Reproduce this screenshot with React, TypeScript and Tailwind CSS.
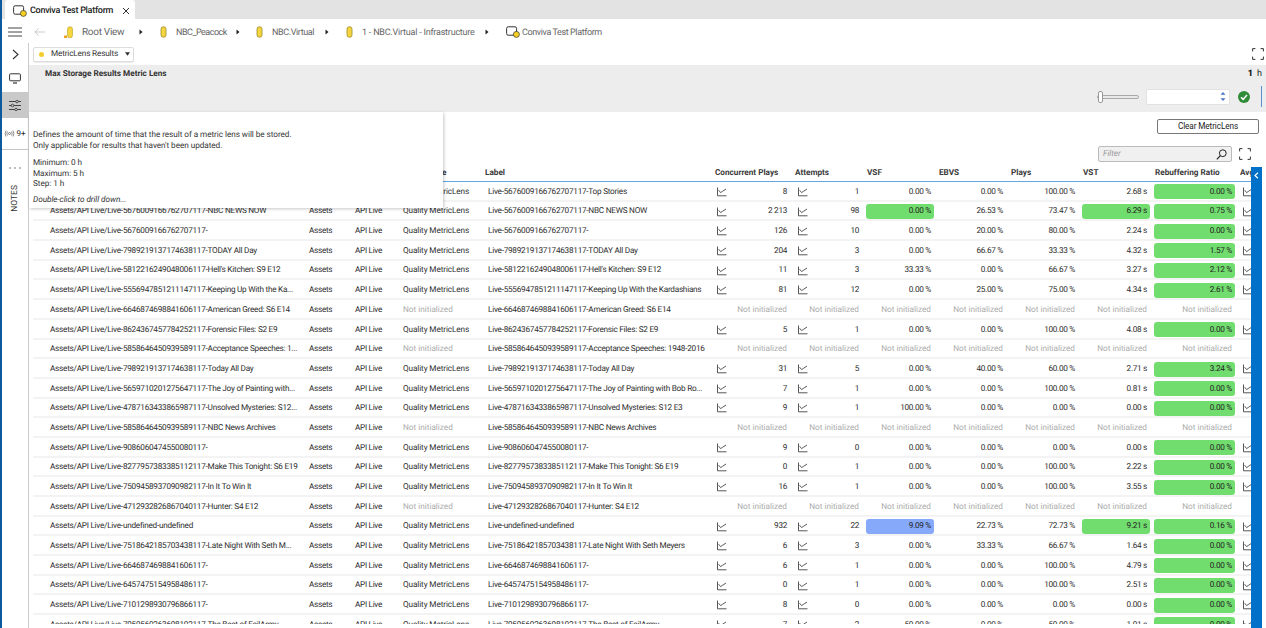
import React from "react";

const Cyl = () => (
  <svg width="7" height="12" viewBox="0 0 7 12" className="shrink-0">
    <rect x="1" y="0.8" width="5" height="10.4" rx="2.2" fill="#f6d63f" stroke="#9a8a2c" strokeWidth="0.8" />
  </svg>
);
const Caret = () => (
  <svg width="4" height="6" viewBox="0 0 4 6" className="shrink-0">
    <path d="M0.5 0.5L3.5 3L0.5 5.5Z" fill="#222" />
  </svg>
);
const Platform = () => (
  <svg width="14" height="12" viewBox="0 0 14 12" className="shrink-0">
    <rect x="0.6" y="0.8" width="10" height="8.4" rx="1.6" fill="none" stroke="#333" strokeWidth="1" />
    <circle cx="10.4" cy="8.4" r="3" fill="#f6d021" stroke="#333" strokeWidth="0.7" />
  </svg>
);
const Chart = () => (
  <svg width="10" height="10" viewBox="0 0 10 10" className="shrink-0">
    <path d="M0.5 0.5V8.8H9.5" fill="none" stroke="#444" strokeWidth="0.9" />
    <path d="M1.6 3.2L3.6 5.6L5.4 4.4L9 2" fill="none" stroke="#444" strokeWidth="0.9" />
  </svg>
);
const Expand = ({ s = 12 }: { s?: number }) => (
  <svg width={s} height={s} viewBox="0 0 12 12" className="shrink-0">
    <path d="M0.6 3.4V0.6H3.4M8.6 0.6H11.4V3.4M11.4 8.6V11.4H8.6M3.4 11.4H0.6V8.6" fill="none" stroke="#333" strokeWidth="1" />
  </svg>
);

type Row = { p: string; l?: string; q?: boolean; v?: string[]; g?: number[]; b?: number[] };

const R = (p: string, l: string | undefined, v?: string[], g: number[] = [6], b: number[] = []): Row => ({ p, l, q: !!v, v, g, b });

const rows: Row[] = [
  R("5676009166762707117-Top Stories", undefined, ["8", "1", "0.00 %", "0.00 %", "100.00 %", "2.68 s", "0.00 %"]),
  R("5676009166762707117-NBC NEWS NOW", undefined, ["2 213", "98", "0.00 %", "26.53 %", "73.47 %", "6.29 s", "0.75 %"], [2, 5, 6]),
  R("5676009166762707117-", undefined, ["126", "10", "0.00 %", "20.00 %", "80.00 %", "2.24 s", "0.00 %"]),
  R("7989219137174638117-TODAY All Day", undefined, ["204", "3", "0.00 %", "66.67 %", "33.33 %", "4.32 s", "1.57 %"]),
  R("5812216249048006117-Hell's Kitchen: S9 E12", undefined, ["11", "3", "33.33 %", "0.00 %", "66.67 %", "3.27 s", "2.12 %"]),
  R("5556947851211147117-Keeping Up With the Ka...", "5556947851211147117-Keeping Up With the Kardashians", ["81", "12", "0.00 %", "25.00 %", "75.00 %", "4.34 s", "2.61 %"]),
  R("6646874698841606117-American Greed: S6 E14", undefined),
  R("8624367457784252117-Forensic Files: S2 E9", undefined, ["5", "1", "0.00 %", "0.00 %", "100.00 %", "4.08 s", "0.00 %"]),
  R("5858646450939589117-Acceptance Speeches: 1...", "5858646450939589117-Acceptance Speeches: 1948-2016"),
  R("7989219137174638117-Today All Day", undefined, ["31", "5", "0.00 %", "40.00 %", "60.00 %", "2.71 s", "3.24 %"]),
  R("5659710201275647117-The Joy of Painting with...", "5659710201275647117-The Joy of Painting with Bob Ro...", ["7", "1", "0.00 %", "0.00 %", "100.00 %", "0.81 s", "0.00 %"]),
  R("4787163433865987117-Unsolved Mysteries: S12...", "4787163433865987117-Unsolved Mysteries: S12 E3", ["9", "1", "100.00 %", "0.00 %", "0.00 %", "0.00 s", "0.00 %"]),
  R("5858646450939589117-NBC News Archives", undefined),
  R("9086060474550080117-", undefined, ["9", "0", "0.00 %", "0.00 %", "0.00 %", "0.00 s", "0.00 %"]),
  R("8277957383385112117-Make This Tonight: S6 E19", undefined, ["0", "1", "0.00 %", "0.00 %", "100.00 %", "2.22 s", "0.00 %"]),
  R("7509458937090982117-In It To Win It", undefined, ["16", "1", "0.00 %", "0.00 %", "100.00 %", "3.55 s", "0.00 %"]),
  R("4712932826867040117-Hunter: S4 E12", undefined),
  R("undefined-undefined", undefined, ["932", "22", "9.09 %", "22.73 %", "72.73 %", "9.21 s", "0.16 %"], [5, 6], [2]),
  R("7518642185703438117-Late Night With Seth M...", "7518642185703438117-Late Night With Seth Meyers", ["6", "3", "0.00 %", "33.33 %", "66.67 %", "1.64 s", "0.00 %"]),
  R("6646874698841606117-", undefined, ["6", "1", "0.00 %", "0.00 %", "100.00 %", "4.79 s", "0.00 %"]),
  R("6457475154958486117-", undefined, ["0", "1", "0.00 %", "0.00 %", "100.00 %", "2.51 s", "0.00 %"]),
  R("7101298930796866117-", undefined, ["8", "0", "0.00 %", "0.00 %", "0.00 %", "0.00 s", "0.00 %"]),
  R("7959560263698102117-The Best of FailArmy", undefined, ["7", "2", "50.00 %", "0.00 %", "50.00 %", "1.01 s", "0.00 %"]),
];

const widths = ["w-[78px]", "w-[72px]", "w-[72px]", "w-[72px]", "w-[72px]", "w-[72px]", "w-[85px]"];
const pads = ["pl-[4px]", "pl-[7px]", "pl-[3px]", "pl-[3px]", "pl-[3px]", "pl-[3px]", "pl-[3px]"];

function Cell({ r, i }: { r: Row; i: number }) {
  const val = r.v ? r.v[i] : "Not initialized";
  const green = r.v && r.g?.includes(i);
  const blue = r.v && r.b?.includes(i);
  const pill = green ? "bg-[#72dd6f] text-[#222]" : blue ? "bg-[#86a9f9] text-[#222]" : "";
  const chart = r.v && i < 2;
  return (
    <div className={`${widths[i]} ${pads[i]} shrink-0 h-full flex items-center pr-[1px]`}>
      {chart && <Chart />}
      <div className={`flex-1 h-[15px] flex items-center justify-end rounded-[3px] pr-[3px] whitespace-nowrap ${pill} ${r.v ? "tracking-[-0.3px]" : "text-[#aaaaaa]"}`}>
        {val}
      </div>
    </div>
  );
}

export default function App() {
  return (
    <div className="w-[1266px] h-[628px] flex overflow-hidden bg-white text-[#2e2e2e] font-['Roboto',sans-serif] text-[8.2px] leading-none [text-rendering:geometricPrecision]">
      <div className="w-[2px] h-full bg-[#0b5a9e] shrink-0" />
      <div className="flex-1 flex flex-col min-w-0">
        {/* tab bar */}
        <div className="h-[19px] bg-[#e3e3e3] flex items-end pl-[3px] shrink-0">
          <div className="w-[130px] h-[19px] bg-white rounded-t-[3px] flex items-center pl-[8px] pt-[3px] whitespace-nowrap">
            <Platform />
            <span className="ml-[3px] font-medium text-[#222] text-[9px] w-[85px] tracking-[-0.28px]">Conviva Test Platform</span>
            <svg width="8" height="8" viewBox="0 0 8 8" className="ml-[7px]"><path d="M1 1L7 7M7 1L1 7" stroke="#333" strokeWidth="1" /></svg>
          </div>
        </div>
        {/* breadcrumb */}
        <div className="h-[24px] flex items-center shrink-0 text-[#666] text-[9px] whitespace-nowrap pt-[2px]">
          <svg width="14" height="10" viewBox="0 0 14 10" className="ml-[6px] shrink-0"><path d="M0 1H14M0 5H14M0 9H14" stroke="#444" strokeWidth="1" /></svg>
          <svg width="11" height="10" viewBox="0 0 12 10" className="ml-[12px] shrink-0"><path d="M12 5H1M5 1L1 5L5 9" fill="none" stroke="#c4c4c4" strokeWidth="1" /></svg>
          <svg width="9" height="13" viewBox="0 0 9 13" className="ml-[19px] shrink-0"><rect x="3.5" y="0.8" width="5" height="11" rx="2.2" fill="#f6d63f" stroke="#b8a02c" strokeWidth="0.6" /><path d="M0 9.5H3V12H0Z" fill="#f0a020" /></svg>
          <span className="ml-[9px] mt-[2px] text-[10px] w-[57px] shrink-0 tracking-[-0.3px]">Root View</span>
          <Caret />
          <span className="ml-[17px]"><Cyl /></span>
          <span className="ml-[9px] mt-[2px] w-[60px] shrink-0 tracking-[-0.5px]">NBC_Peacock</span>
          <Caret />
          <span className="ml-[16px]"><Cyl /></span>
          <span className="ml-[9px] mt-[2px] w-[53px] shrink-0 tracking-[-0.4px]">NBC.Virtual</span>
          <Caret />
          <span className="ml-[17px]"><Cyl /></span>
          <span className="ml-[9px] mt-[2px] w-[123px] shrink-0 tracking-[-0.22px]">1 - NBC.Virtual - Infrastructure</span>
          <Caret />
          <span className="ml-[17px]"><Platform /></span>
          <span className="ml-[2px] mt-[2px] tracking-[-0.4px]">Conviva Test Platform</span>
        </div>
        <div className="flex-1 flex min-h-0">
          {/* sidebar */}
          <div className="w-[27px] shrink-0 border-r border-[#cccccc] flex flex-col items-center relative">
            <div className="h-[23px] flex items-center justify-center">
              <svg width="7" height="11" viewBox="0 0 7 11"><path d="M1 1L6 5.5L1 10" fill="none" stroke="#333" strokeWidth="1.1" /></svg>
            </div>
            <div className="h-[26px] flex items-center justify-center pb-[2px]">
              <svg width="12" height="11" viewBox="0 0 12 11"><rect x="0.6" y="0.8" width="10.8" height="7" rx="0.8" fill="none" stroke="#333" strokeWidth="1" /><path d="M4 10H8" stroke="#333" strokeWidth="1.2" /></svg>
            </div>
            <div className="h-[26px] w-full bg-[#c9c9c9] flex items-center justify-center">
              <svg width="12" height="11" viewBox="0 0 12 11"><path d="M0 1.5H12M0 5.5H12M0 9.5H12" stroke="#333" strokeWidth="0.9" /><circle cx="8" cy="1.5" r="1.3" fill="#c9c9c9" stroke="#333" strokeWidth="0.8" /><circle cx="3.5" cy="5.5" r="1.3" fill="#c9c9c9" stroke="#333" strokeWidth="0.8" /><circle cx="7" cy="9.5" r="1.3" fill="#c9c9c9" stroke="#333" strokeWidth="0.8" /></svg>
            </div>
            <div className="h-[32px] w-full border-b border-[#c4c4c4] flex items-center justify-center whitespace-nowrap gap-[1px]">
              <svg width="11" height="7" viewBox="0 0 11 7"><path d="M2 0.5Q0.3 3.5 2 6.5M3.4 1.5Q2.4 3.5 3.4 5.5M9 0.5Q10.7 3.5 9 6.5M7.6 1.5Q8.6 3.5 7.6 5.5" fill="none" stroke="#444" strokeWidth="0.6" /><circle cx="5.5" cy="3.5" r="1" fill="none" stroke="#444" strokeWidth="0.6" /></svg>
              <span className="text-[8px] text-[#222]">9+</span>
            </div>
            <div className="h-[35px] shrink-0 flex items-center justify-center">
              <svg width="12" height="2" viewBox="0 0 12 2"><circle cx="1" cy="1" r="0.7" fill="#444" /><circle cx="6" cy="1" r="0.7" fill="#444" /><circle cx="11" cy="1" r="0.7" fill="#444" /></svg>
            </div>
            <div className="[writing-mode:vertical-rl] rotate-180 text-[8.5px] text-[#333]">NOTES</div>
          </div>
          {/* content */}
          <div className="flex-1 min-w-0 flex flex-col relative">
            <div className="h-[22px] shrink-0 flex items-center pl-[4px] pr-[2px]">
              <div className="w-[101px] h-[15px] rounded-[2px] border border-[#dddddd] bg-white flex items-center pl-[5px] text-[8.2px] text-[#333] shadow-[0_1px_1px_rgba(0,0,0,0.08)] whitespace-nowrap">
                <span className="w-[5px] h-[5px] rounded-full bg-[#f2ce2c] shrink-0" />
                <span className="ml-[7px] w-[66px] shrink-0 tracking-[-0.15px]">MetricLens Results</span>
                <svg width="5" height="4" viewBox="0 0 6 4" className="ml-[8px] shrink-0"><path d="M0 0H6L3 4Z" fill="#333" /></svg>
              </div>
              <div className="ml-auto"><Expand /></div>
            </div>
            {/* gray band */}
            <div className="h-[47px] shrink-0 bg-[#ededed] flex flex-col pl-[16px] pr-[4px] pt-[3px]">
              <div className="flex justify-between h-[12px] items-center font-bold text-[#333]">
                <span>Max Storage Results Metric Lens</span>
                <span className="flex gap-[4px] text-[9px] text-[#222]"><b>1</b><span className="font-normal">h</span></span>
              </div>
              <div className="flex items-center justify-end mt-[6px] h-[21px]">
                <div className="relative w-[42px] h-[4px] bg-[#e8e8e8] border border-[#aaa] rounded-[2px]">
                  <div className="absolute left-0 -top-[5px] w-[5px] h-[12px] bg-white border border-[#999] rounded-[2px]" />
                </div>
                <div className="ml-[7px] w-[84px] h-[16px] bg-white rounded-[2px] border border-[#e2e2e2] flex items-center justify-end pr-[3px]">
                  <svg width="6" height="11" viewBox="0 0 6 11"><path d="M0.5 3.8L3 1L5.5 3.8Z M0.5 7.2L3 10L5.5 7.2Z" fill="#4a76c8" /></svg>
                </div>
                <svg width="12" height="12" viewBox="0 0 12 12" className="ml-[8px]"><circle cx="6" cy="6" r="6" fill="#2e8b37" /><path d="M3 6.2L5.2 8.3L9 4" fill="none" stroke="#fff" strokeWidth="1.5" /></svg>
                <div className="ml-[11px] w-px h-[21px] bg-[#5a8fd0]" />
              </div>
            </div>
            {/* action */}
            <div className="h-[34px] shrink-0 flex items-start justify-end pr-[7px] pt-[7px]">
              <button className="w-[102px] h-[15px] bg-white border border-[#777] rounded-[2px] text-[8.2px] text-[#222] leading-none tracking-[-0.1px]">Clear MetricLens</button>
            </div>
            {/* filter */}
            <div className="h-[18px] shrink-0 flex items-start justify-end pr-[15px]">
              <div className="w-[134px] h-[16px] bg-[#f0f0f0] border border-[#bbbbbb] rounded-[2px] flex items-center justify-between pl-[4px] pr-[4px] italic text-[#999]">
                <span>Filter</span>
                <svg width="11" height="11" viewBox="0 0 11 11"><circle cx="6.8" cy="4.2" r="3.4" fill="none" stroke="#222" strokeWidth="1" /><path d="M4.4 6.6L0.8 10.4" stroke="#222" strokeWidth="1.2" /></svg>
              </div>
              <div className="ml-[7px] mt-[2px]"><Expand /></div>
            </div>
            {/* table */}
            <div className="flex-1 min-h-0 flex">
              <div className="w-[1222px] pl-[4px] shrink-0 flex flex-col min-w-0 overflow-hidden h-[460px]">
                <div className="h-[18px] shrink-0 flex items-center border-b-[1.5px] border-[#63a7e2] font-bold text-[#3a3a3a] whitespace-nowrap pt-[2px]">
                  <div className="w-[272px] shrink-0" />
                  <div className="w-[46px] shrink-0" />
                  <div className="w-[48px] shrink-0" />
                  <div className="w-[85px] shrink-0 pl-[4px]">Metric Type</div>
                  <div className="w-[229px] shrink-0 pl-[1px]">Label</div>
                  <div className="w-[82px] shrink-0 pl-[2px]">Concurrent Plays</div>
                  <div className="w-[72px] shrink-0">Attempts</div>
                  <div className="w-[72px] shrink-0">VSF</div>
                  <div className="w-[72px] shrink-0">EBVS</div>
                  <div className="w-[72px] shrink-0">Plays</div>
                  <div className="w-[72px] shrink-0">VST</div>
                  <div className="w-[85px] shrink-0">Rebuffering Ratio</div>
                  <div className="flex-1 overflow-hidden">Avg</div>
                </div>
                {rows.map((r, idx) => (
                  <div key={idx} className="h-[19.7px] shrink-0 flex items-center border-b-2 border-[#f3f3f3] whitespace-nowrap pt-[2px]">
                    <div className="w-[272px] shrink-0 pl-[17px] overflow-hidden tracking-[-0.25px]">Assets/API Live/Live-{r.p}</div>
                    <div className="w-[46px] shrink-0 pl-[4px] tracking-[-0.3px]">Assets</div>
                    <div className="w-[48px] shrink-0 pl-[4px] tracking-[-0.3px]">API Live</div>
                    <div className={`w-[85px] shrink-0 pl-[4px] ${r.q ? "tracking-[-0.1px]" : "text-[#aaaaaa]"}`}>{r.q ? "Quality MetricLens" : "Not initialized"}</div>
                    <div className="w-[229px] shrink-0 pl-[4px] overflow-hidden tracking-[-0.25px]">Live-{r.l ?? r.p}</div>
                    {[0, 1, 2, 3, 4, 5, 6].map((i) => <Cell key={i} r={r} i={i} />)}
                    <div className="flex-1 pl-[7px] min-w-0 overflow-hidden">{r.v && <Chart />}</div>
                  </div>
                ))}
              </div>
              <div className="w-[11px] shrink-0 bg-[#0070c8] mt-[3px] flex justify-center pt-[5px] z-10">
                <svg width="5" height="7" viewBox="0 0 5 7"><path d="M4 0.8L1 3.5L4 6.2" fill="none" stroke="#fff" strokeWidth="1.2" /></svg>
              </div>
            </div>
            {/* tooltip */}
            <div className="absolute left-0 top-[69px] w-[414px] h-[96px] bg-white shadow-[1px_1px_3px_rgba(0,0,0,0.22)] pl-[4px] pt-[18px] text-[#333] leading-[10.5px] z-20 tracking-[-0.05px]">
              <div>Defines the amount of time that the result of a metric lens will be stored.</div>
              <div>Only applicable for results that haven't been updated.</div>
              <div className="mt-[7px]">Minimum: 0 h</div>
              <div>Maximum: 5 h</div>
              <div>Step: 1 h</div>
              <div className="mt-[5px] italic">Double-click to drill down...</div>
            </div>
          </div>
        </div>
      </div>
    </div>
  );
}
